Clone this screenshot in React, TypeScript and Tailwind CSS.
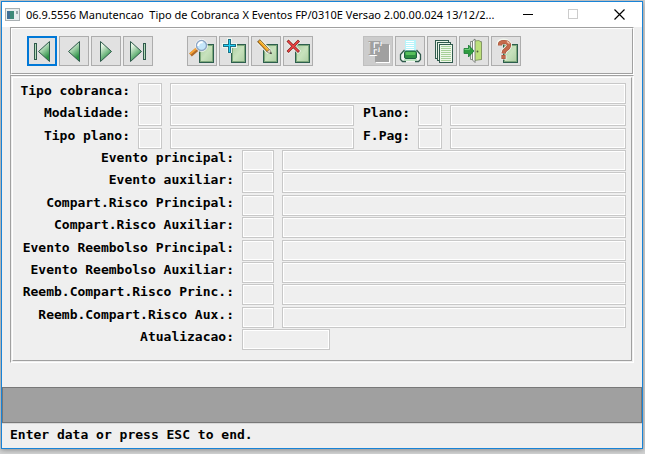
import React, { useState } from 'react';

const PageShape = () => (
  <g shapeRendering="crispEdges">
    <rect x="12" y="8" width="15" height="19" fill="#2d5f4e" />
    <rect x="13" y="9" width="13" height="17" fill="#7fa97c" />
    <rect x="14" y="10" width="11" height="15" fill="url(#page)" />
  </g>
);

const leftArrow = 'M0.5 10.5L11.5 0.5V20.5Z';
const rightArrow = 'M11.5 10.5L0.5 0.5V20.5Z';

const Arrow = ({ d, x }: { d: string; x: number }) => (
  <path d={d} transform={`translate(${x} 5)`} fill="url(#arrow)" stroke="#2f5a4c" strokeWidth="1" />
);

const Bar = ({ x }: { x: number }) => (
  <rect x={x + 0.5} y="7.5" width="2" height="16" fill="#b5dcb8" stroke="#2f5a4c" />
);

const icons: Record<string, React.ReactNode> = {
  first: (
    <>
      <Bar x={7} />
      <Arrow d={leftArrow} x={11} />
    </>
  ),
  previous: <Arrow d={leftArrow} x={9} />,
  next: <Arrow d={rightArrow} x={9} />,
  last: (
    <>
      <Arrow d={rightArrow} x={7} />
      <Bar x={20} />
    </>
  ),
  search: (
    <>
      <PageShape />
      <path d="M3.5 19L10.5 13" stroke="#b06a2a" strokeWidth="4" />
      <path d="M3 18L10 12" stroke="#f5a236" strokeWidth="2" />
      <circle cx="14.5" cy="9.5" r="6.4" fill="#fff" opacity="0.8" />
      <circle cx="14.5" cy="9.5" r="5" fill="#c5e6fa" stroke="#8ea6c4" strokeWidth="1.4" />
      <path d="M11.2 10a3.4 3.4 0 0 1 4.5-3.5" fill="none" stroke="#fff" strokeWidth="2" />
    </>
  ),
  add: (
    <>
      <PageShape />
      <g shapeRendering="crispEdges">
        <path d="M8 2h5v5h5v5h-5v5H8v-5H3V7h5z" fill="#eef6ee" />
        <path d="M9 3h3v5h5v3h-5v6H9v-6H4V8h5z" fill="#1d6f86" />
        <path d="M10 4h1v5h5v1h-5v6h-1v-6H5V9h5z" fill="#1fd0f5" />
      </g>
    </>
  ),
  edit: (
    <>
      <PageShape />
      <path d="M8 5L18.5 16" stroke="#f3f6ee" strokeWidth="6" />
      <path d="M7.5 4.5L17.5 15" stroke="#6b4a1c" strokeWidth="3.8" />
      <path d="M8 5L17 14.5" stroke="#f5a623" strokeWidth="2.4" />
      <path d="M8.8 4.6L17.6 13.8" stroke="#ffd75e" strokeWidth="0.9" />
      <path d="M15.8 16l3-3 1.6 4.8z" fill="#ecd9bd" stroke="#555" strokeWidth="0.5" />
      <path d="M18.5 17.3l2.2.8-.6-2.2z" fill="#222" />
    </>
  ),
  remove: (
    <>
      <PageShape />
      <path d="M4 4L16.5 16.5M16.5 4L4 16.5" stroke="#f3f6ee" strokeWidth="4.5" />
      <path d="M4.5 4.5L16 16M16 4.5L4.5 16" stroke="#7c2424" strokeWidth="2.9" />
      <path d="M5 5L15.5 15.5M15.5 5L5 15.5" stroke="#f04242" strokeWidth="1.6" />
    </>
  ),
  font: (
    <>
      <path d="M13 9h14v18H13z" fill="#fff" />
      <path d="M12 8h14v18H12z" fill="#a0a0a0" />
      <g fontFamily="'Liberation Serif', serif" fontWeight="bold" fontSize="22">
        <text x="6" y="20" fill="#fff">F</text>
        <text x="5" y="19" fill="#a0a0a0">F</text>
      </g>
    </>
  ),
  print: (
    <>
      <path d="M9 14L5.5 18v5.5L8 26h15l2.5-2.5V18L22 14z" fill="#f2f5f2" />
      <g shapeRendering="crispEdges">
        <path d="M10 4h11v11H10z" fill="#b8f4fa" />
        <path d="M11 5.5h8M11 7.5h8M11 9.5h8M11 11.5h8M11 13.5h8" stroke="#fff" />
      </g>
      <path
        d="M9.5 14L5.5 18.5v5L7.5 25.5H11M21.5 14L25.5 18.5v5L23.5 25.5H20"
        fill="none"
        stroke="#2f5a4c"
        strokeWidth="1.3"
      />
      <rect x="9.5" y="15" width="12" height="7.5" rx="1.5" fill="#2f8f42" stroke="#1c6040" />
      <rect x="10.5" y="16" width="10" height="3" rx="1" fill="#58bf5c" />
      <path d="M9 24h13" stroke="#a9dcae" strokeWidth="1.5" />
    </>
  ),
  copy: (
    <g shapeRendering="crispEdges" stroke="#2f5a4c" strokeWidth="1">
      <path d="M8.5 4.5h13v18h-13z" fill="#e8f2e6" />
      <path d="M10.5 6.5h13v18h-13z" fill="#e8f2e6" />
      <path d="M12.5 8.5h13v18h-13z" fill="#eef7ea" />
      <path
        d="M14 10.5h10M14 12.5h10M14 14.5h10M14 16.5h10M14 18.5h10M14 20.5h10M14 22.5h10M14 24.5h10"
        stroke="#a6cf98"
      />
    </g>
  ),
  exit: (
    <>
      <path d="M11.5 5.5h11v18h-11z" fill="#eef0ec" stroke="#8a918a" />
      <path d="M15.5 5L20 4.5l2.5 2v17l-7 1z" fill="#bde07c" stroke="#7c8f5c" strokeWidth="0.8" />
      <path d="M13.5 5l2.5-2v23.5l-2.5-2.5z" fill="#fff" stroke="#6f7770" strokeWidth="0.9" />
      <circle cx="18.5" cy="15.5" r="0.9" fill="#4d5a3c" />
      <path d="M5 12.5h4.5V9L15 15l-5.5 6v-3.5H5z" fill="#2f9c40" stroke="#1b7a35" strokeWidth="0.8" />
      <path d="M5.5 13.5h5v-2" fill="none" stroke="#6fce77" />
    </>
  ),
  help: (
    <>
      <PageShape />
      <g fill="none">
        <path
          d="M8.5 9.5V8.5q0-3 4-3T18 8.5q0 3-2.5 4.5T12.5 17.5M12.5 19v4.5"
          stroke="#f3f6ee"
          strokeWidth="6"
        />
        <path
          d="M9 9.5V8.5q0-2.5 4-2.5T18 8.5q0 3-2.5 4.5T12.5 17.5M12.5 19v4"
          stroke="#a5523a"
          strokeWidth="4.2"
        />
        <path
          d="M9 9V8.5q0-2.5 4-2.5T18 8.5q0 3-2.5 4.5T12.5 17M12.5 19.5v3"
          stroke="#c46a4c"
          strokeWidth="3"
        />
        <path d="M16 5.5l2.5 2" stroke="#f2c9b2" strokeWidth="1.5" />
      </g>
    </>
  ),
};

const toolGroups = [
  [
    { icon: 'first', title: 'Primeiro' },
    { icon: 'previous', title: 'Anterior' },
    { icon: 'next', title: 'Proximo' },
    { icon: 'last', title: 'Ultimo' },
  ],
  [
    { icon: 'search', title: 'Consultar' },
    { icon: 'add', title: 'Incluir' },
    { icon: 'edit', title: 'Alterar' },
    { icon: 'remove', title: 'Excluir' },
  ],
  [
    { icon: 'font', title: 'Fonte', disabled: true },
    { icon: 'print', title: 'Imprimir' },
    { icon: 'copy', title: 'Copiar' },
    { icon: 'exit', title: 'Sair' },
    { icon: 'help', title: 'Ajuda' },
  ],
];

const eventRows = [
  'Evento principal:',
  'Evento auxiliar:',
  'Compart.Risco Principal:',
  'Compart.Risco Auxiliar:',
  'Evento Reembolso Principal:',
  'Evento Reembolso Auxiliar:',
  'Reemb.Compart.Risco Princ.:',
  'Reemb.Compart.Risco Aux.:',
];

const Field = ({ id, label, className }: { id: string; label?: string; className: string }) => (
  <input
    id={id}
    type="text"
    aria-label={label}
    className={`h-[21px] min-w-0 border border-[#c8c8c8] bg-[#efefef] px-1 shadow-[inset_0_0_0_1px_#fff] outline-none ${className}`}
  />
);

const Label = ({ id, className, children }: { id: string; className: string; children: React.ReactNode }) => (
  <label htmlFor={id} className={`shrink-0 whitespace-nowrap text-right ${className}`}>
    {children}
  </label>
);

export default function App() {
  const [active, setActive] = useState('first');

  return (
    <div className="flex min-h-screen flex-col bg-[#d2d3d3] pt-px pr-[2px] pb-[5px] pl-px">
      <svg width="0" height="0" className="absolute" aria-hidden="true">
        <defs>
          <linearGradient id="arrow" x1="0" y1="0" x2="0.5" y2="1">
            <stop offset="0.25" stopColor="#e4f4e2" />
            <stop offset="0.95" stopColor="#2f9448" />
          </linearGradient>
          <linearGradient id="page" x1="0" y1="0" x2="1" y2="1">
            <stop offset="0" stopColor="#b0d0a6" />
            <stop offset="0.5" stopColor="#c8e2bd" />
            <stop offset="1" stopColor="#b0d0a6" />
          </linearGradient>
        </defs>
      </svg>

      <div className="flex flex-1 flex-col border border-[#1883d7] bg-[#efefef] shadow-[0_1px_5px_rgba(0,0,0,0.35)]">
        <header className="flex h-[25px] items-center bg-white pl-[3px]">
          <svg width="15" height="13" className="shrink-0" shapeRendering="crispEdges" aria-hidden="true">
            <rect width="15" height="13" fill="#a9b0b3" />
            <rect x="1" y="1" width="13" height="11" fill="#e9eeee" />
            <rect x="2" y="3" width="7" height="8" fill="#3f8a78" />
            <rect x="2" y="3" width="3" height="8" fill="#416f96" />
            <rect x="11" y="3" width="2" height="3" fill="#9aa" />
          </svg>
          <h1 className="ml-[6px] min-w-0 flex-1 overflow-hidden whitespace-pre font-['Noto_Sans','Open_Sans',sans-serif] text-[11px] leading-4 text-black">
            06.9.5556 Manutencao  Tipo de Cobranca X Eventos FP/0310E Versao 2.00.00.024 13/12/2...
          </h1>
          <div className="flex shrink-0">
            <button type="button" aria-label="Minimizar" className="flex h-6 w-[45px] items-center justify-center">
              <svg width="11" height="11" shapeRendering="crispEdges">
                <path d="M0 5.5h10" stroke="#000" />
              </svg>
            </button>
            <button type="button" aria-label="Maximizar" disabled className="flex h-6 w-[45px] items-center justify-center">
              <svg width="11" height="11" shapeRendering="crispEdges">
                <path d="M.5.5h9v9h-9z" fill="none" stroke="#ccc" />
              </svg>
            </button>
            <button type="button" aria-label="Fechar" className="flex h-6 w-[46px] items-center justify-center">
              <svg width="11" height="11">
                <path d="M.5.5l10 10M10.5.5l-10 10" stroke="#000" strokeWidth="1.2" />
              </svg>
            </button>
          </div>
        </header>

        <div className="mx-2 border border-t-[#a0a0a0] border-r-white border-b-white border-l-[#a0a0a0]">
          <div className="flex gap-[34px] border border-t-white border-r-[#a0a0a0] border-b-[#a0a0a0] border-l-white py-[7px] pl-[15px]">
            {toolGroups.map((group, index) => (
              <div key={index} className={`flex gap-[2px] ${index === 2 ? 'ml-4' : ''}`}>
                {group.map((tool) => (
                  <button
                    key={tool.icon}
                    type="button"
                    title={tool.title}
                    aria-label={tool.title}
                    disabled={'disabled' in tool}
                    onClick={() => setActive(tool.icon)}
                    className={`h-[30px] w-[30px] overflow-hidden ${
                      active === tool.icon
                        ? 'bg-[#e1e1e1] shadow-[inset_0_0_0_2px_#0078d7]'
                        : 'bg-[#e1e1e1] shadow-[inset_0_0_0_1px_#adadad] disabled:bg-[#cccccc] disabled:shadow-[inset_0_0_0_1px_#bfbfbf]'
                    }`}
                  >
                    <svg width="30" height="30" viewBox="0 0 30 30" className="block">
                      {icons[tool.icon]}
                    </svg>
                  </button>
                ))}
              </div>
            ))}
          </div>
        </div>

        <form className="mx-2 flex flex-1 flex-col border border-t-[#a0a0a0] border-r-white border-b-white border-l-[#a0a0a0] p-px">
          <div className="flex flex-1 flex-col justify-between border border-t-white border-r-[#a0a0a0] border-b-[#a0a0a0] border-l-white pt-[5px] pr-[5px] pb-[10px] pl-[5px] font-['DejaVu_Sans_Mono','Liberation_Mono',monospace] text-[13px] leading-4 font-bold text-black">
            <div className="flex gap-2">
              <Label id="cobranca" className="w-28">Tipo cobranca:</Label>
              <Field id="cobranca" className="w-6" />
              <Field id="cobranca-desc" label="Descricao da cobranca" className="flex-1" />
            </div>
            <div className="flex gap-2">
              <Label id="modalidade" className="w-28">Modalidade:</Label>
              <Field id="modalidade" className="w-6" />
              <Field id="modalidade-desc" label="Descricao da modalidade" className="w-46" />
              <Label id="plano" className="w-12">Plano:</Label>
              <Field id="plano" className="w-6" />
              <Field id="plano-desc" label="Descricao do plano" className="flex-1" />
            </div>
            <div className="flex gap-2">
              <Label id="tipo-plano" className="w-28">Tipo plano:</Label>
              <Field id="tipo-plano" className="w-6" />
              <Field id="tipo-plano-desc" label="Descricao do tipo de plano" className="w-46" />
              <Label id="pag" className="w-12">F.Pag:</Label>
              <Field id="pag" className="w-6" />
              <Field id="pag-desc" label="Descricao da forma de pagamento" className="flex-1" />
            </div>
            {eventRows.map((label, index) => (
              <div key={label} className="flex gap-2">
                <Label id={`evento-${index}`} className="w-54">{label}</Label>
                <Field id={`evento-${index}`} className="w-8" />
                <Field id={`evento-desc-${index}`} label={`Descricao ${label}`} className="flex-1" />
              </div>
            ))}
            <div className="flex gap-2">
              <Label id="atualizacao" className="w-54">Atualizacao:</Label>
              <Field id="atualizacao" className="w-22" />
            </div>
          </div>
        </form>

        <div className="mt-6 h-9 border border-[#787878] bg-[#a0a0a0]" />
        <footer className="border-t border-[#d8d8d8] px-2 pt-[3px] pb-[5px] font-['DejaVu_Sans_Mono','Liberation_Mono',monospace] text-[13px] leading-4 font-bold text-black">
          Enter data or press ESC to end.
        </footer>
      </div>
    </div>
  );
}
